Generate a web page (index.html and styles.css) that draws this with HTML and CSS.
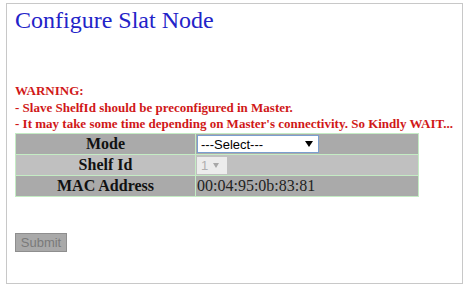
FILE: index.html
```html
<!DOCTYPE html>
<html>
<head>
<meta charset="utf-8">
<title>Configure Slat Node</title>
<link rel="stylesheet" href="styles.css">
</head>
<body>
<div class="page">
  <div class="title">Configure Slat Node</div>
  <div class="warning">
    WARNING:<br>
    - Slave ShelfId should be preconfigured in Master.<br>
    - It may take some time depending on Master's connectivity. So Kindly WAIT...
  </div>
  <table class="form">
    <tr class="row-dark">
      <th>Mode</th>
      <td>
        <span class="sel sel-mode">
          <select class="select select-mode">
            <option>---Select---</option>
          </select>
          <svg class="arrow" width="8" height="6" viewBox="0 0 8 6"><path d="M0 0H8L4 6Z" fill="#000"/></svg>
        </span>
      </td>
    </tr>
    <tr class="row-light">
      <th>Shelf Id</th>
      <td>
        <span class="sel sel-shelf">
          <select class="select select-shelf" disabled>
            <option>1</option>
          </select>
          <svg class="arrow arrow-small" width="6" height="5" viewBox="0 0 6 5"><path d="M0 0H6L3 5Z" fill="#a8a8a8"/></svg>
        </span>
      </td>
    </tr>
    <tr class="row-dark">
      <th>MAC Address</th>
      <td class="mac">00:04:95:0b:83:81</td>
    </tr>
  </table>
  <button class="submit" disabled>Submit</button>
</div>
</body>
</html>
```
FILE: styles.css
```css
html, body {
  margin: 0;
  padding: 0;
  background: #fff;
}
body {
  font-family: "Liberation Serif", "Times New Roman", serif;
}
.page {
  margin: 3px 5px 0 6px;
  border: 1px solid #c8c8c8;
  height: 277px;
  padding: 2px 8px 0 8px;
}
.title {
  margin: 0;
  font-family: "Times New Roman", "Liberation Serif", serif;
  font-size: 24px;
  font-weight: 400;
  line-height: 28px;
  color: #2323c8;
}
.warning {
  margin-top: 49px;
  font-family: "Liberation Serif", "Times New Roman", serif;
  font-size: 13px;
  font-weight: bold;
  line-height: 16.5px;
  color: #d01818;
}
.form {
  border-collapse: collapse;
  width: 404px;
  border: 1px solid #c4ecc4;
}
.form th, .form td {
  border: 1px solid #c4ecc4;
  height: 20px;
  padding: 0 1px;
  font-family: "Liberation Serif", "Times New Roman", serif;
  font-size: 16px;
}
.form th {
  width: 177px;
  font-weight: bold;
  text-align: center;
  color: #111;
}
.form td {
  text-align: left;
  color: #222;
}
.row-dark th, .row-dark td {
  background: #aaaaaa;
}
.row-light th, .row-light td {
  background: #c0c0c0;
}
.sel {
  position: relative;
  display: inline-flex;
  vertical-align: middle;
}
.select {
  appearance: none;
  -webkit-appearance: none;
  font-family: "Liberation Sans", Arial, sans-serif;
  font-size: 13px;
  margin: 0;
  background: #fff;
  border-radius: 0;
  outline: none;
}
.select-mode {
  width: 122px;
  height: 18px;
  border: 1px solid #7a9fd0;
  padding: 0 0 0 3px;
  color: #000;
}
.select-shelf {
  width: 30px;
  height: 17px;
  border: 1px solid #fff;
  padding: 0 0 0 3px;
  color: #a8a8a8;
}
.arrow {
  position: absolute;
  right: 6px;
  top: 6px;
  pointer-events: none;
}
.arrow-small {
  right: 8px;
  top: 6px;
}
.submit {
  display: block;
  margin-top: 36px;
  width: 52px;
  height: 19px;
  padding: 0;
  font-family: "Liberation Sans", Arial, sans-serif;
  font-size: 13px;
  color: #7a7a7a;
  background: #a9a9a9;
  border: 1px solid #8e8e8e;
  border-radius: 0;
}
```
